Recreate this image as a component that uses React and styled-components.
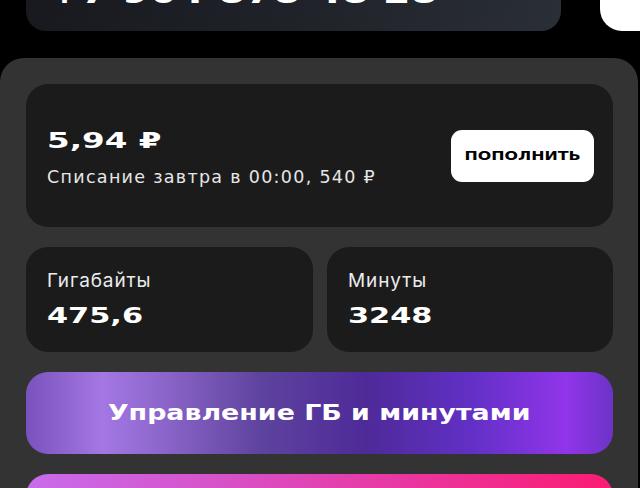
import React from 'react';
import styled, { createGlobalStyle } from 'styled-components';

const GlobalStyle = createGlobalStyle`
  html, body {
    margin: 0;
    padding: 0;
    background: #000;
    overflow: hidden;
  }
  body {
    font-family: "DejaVu Sans", sans-serif;
  }
`;

const Screen = styled.div`
  width: 640px;
  height: 488px;
  overflow: hidden;
  background: #000;
`;

const TopRow = styled.div`
  display: flex;
  align-items: stretch;
  justify-content: space-between;
  height: 90px;
  margin-top: -59px;
`;

const PhoneCard = styled.div`
  margin-left: 26px;
  width: 535px;
  border-radius: 0 0 20px 20px;
  background: linear-gradient(100deg, #17191e 0%, #1f2229 50%, #2a2e36 100%);
  display: flex;
  align-items: flex-end;
  padding: 0 0 23px 22px;
  box-sizing: border-box;
`;

const Phone = styled.span`
  display: inline-block;
  color: #fff;
  font-weight: 700;
  font-size: 34px;
  line-height: 1;
  transform: scaleX(1.16);
  transform-origin: left center;
  white-space: nowrap;
`;

const SideTab = styled.div`
  width: 40px;
  background: #fff;
  border-radius: 0 0 0 22px;
`;

const Panel = styled.div`
  margin: 27px 2px 0 0;
  background: #333333;
  border-radius: 24px 24px 0 0;
  padding: 26px 25px 0 26px;
  display: flex;
  flex-direction: column;
  gap: 20px;
`;

const Card = styled.div`
  background: #1b1b1b;
  border-radius: 22px;
  box-sizing: border-box;
`;

const BalanceCard = styled(Card)`
  height: 143px;
  display: flex;
  align-items: center;
  justify-content: space-between;
  padding: 0 19px 0 21px;
`;

const BalanceInfo = styled.div`
  display: flex;
  flex-direction: column;
  gap: 15px;
  padding-top: 6px;
`;

const Wide = styled.span`
  display: inline-block;
  color: ${p => p.$color || '#fff'};
  font-family: "DejaVu Sans", sans-serif;
  font-weight: 700;
  font-size: ${p => p.$size || 21}px;
  line-height: 1;
  transform: scaleX(${p => p.$stretch || 1.4});
  transform-origin: ${p => (p.$center ? 'center' : 'left')} center;
  white-space: nowrap;
`;

const Sub = styled.div`
  color: #e6e6e6;
  font-family: "DejaVu Sans", sans-serif;
  font-size: 17.5px;
  line-height: 20px;
  letter-spacing: 1.3px;
`;

const TopUp = styled.button`
  width: 143px;
  height: 52px;
  border: none;
  border-radius: 11px;
  background: #fff;
  display: flex;
  align-items: center;
  justify-content: center;
  padding: 0;
`;

const Stats = styled.div`
  display: grid;
  grid-template-columns: 287px 1fr;
  gap: 14px;
`;

const StatCard = styled(Card)`
  height: 105px;
  padding: 23px 21px 0;
  display: flex;
  flex-direction: column;
  gap: 13px;
`;

const Label = styled.div`
  color: #ececec;
  font-family: Inter, "Noto Sans", sans-serif;
  font-size: 19px;
  line-height: 22px;
  letter-spacing: 0.9px;
`;

const ActionButton = styled.div`
  height: 82px;
  border-radius: 22px;
  display: flex;
  align-items: center;
  justify-content: center;
  background: ${p => p.$bg};
`;

const purple = `linear-gradient(90deg,
  #7a52bd 0%,
  #a477e4 13%,
  #8a64c8 24%,
  #5e439e 40%,
  #4e2a99 58%,
  #6230c6 76%,
  #9135ea 92%,
  #6c33c6 100%)`;

const pink = `linear-gradient(90deg, #c86cec 0%, #d850c6 35%, #ea36a0 65%, #fb1c72 100%)`;

export default function App() {
  return (
    <Screen>
      <GlobalStyle />
      <TopRow>
        <PhoneCard>
          <Phone>+7 904 878 48 28</Phone>
        </PhoneCard>
        <SideTab />
      </TopRow>
      <Panel>
        <BalanceCard>
          <BalanceInfo>
            <Wide $size={21} $stretch={1.55}>5,94 ₽</Wide>
            <Sub>Списание завтра в 00:00, 540 ₽</Sub>
          </BalanceInfo>
          <TopUp>
            <Wide $size={13} $stretch={1.22} $center $color="#000">ПОПОЛНИТЬ</Wide>
          </TopUp>
        </BalanceCard>
        <Stats>
          <StatCard>
            <Label>Гигабайты</Label>
            <Wide $size={22} $stretch={1.38}>475,6</Wide>
          </StatCard>
          <StatCard>
            <Label>Минуты</Label>
            <Wide $size={22} $stretch={1.38}>3248</Wide>
          </StatCard>
        </Stats>
        <ActionButton $bg={purple}>
          <Wide $size={22} $stretch={1.22} $center>Управление ГБ и минутами</Wide>
        </ActionButton>
        <ActionButton $bg={pink} />
      </Panel>
    </Screen>
  );
}
